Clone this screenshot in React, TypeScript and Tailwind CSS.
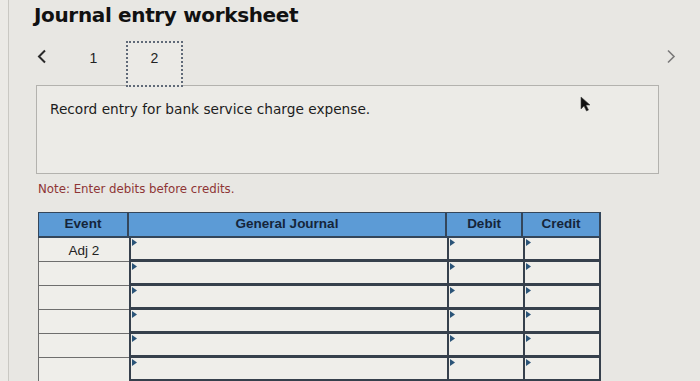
import React from "react";

const Tri = () => (
  <svg width="5" height="7" viewBox="0 0 5 7" className="absolute left-[1px] top-[1px]">
    <polygon points="0,0 5,3.5 0,7" fill="#2b5478" />
  </svg>
);

function InputCell({ w, last }: { w: string; last?: boolean }) {
  return (
    <div
      className={`relative ${w} h-full border-l-2 border-b-[3px] border-[#36404c] bg-[#efeeea] ${last ? "border-r-2" : ""}`}
    >
      <Tri />
    </div>
  );
}

export default function App() {
  const rows = ["Adj 2", "", "", "", "", ""];
  return (
    <div className="relative w-[700px] h-[381px] overflow-hidden bg-[#ebeae6] font-['DejaVu_Sans',sans-serif]">
      <div className="ml-[8px] h-full border-l border-[#c9c8c3] bg-[#e8e7e3]">
        <h1 className="pl-[25px] pt-[1px] text-[20px] leading-[28px] font-bold text-[#111] tracking-[-0.35px]">
          Journal entry worksheet
        </h1>

        {/* nav */}
        <div className="flex items-start h-[44px] mt-[12px] font-['Liberation_Sans',sans-serif] text-[14px] text-[#222]">
          <div className="w-[52px] pl-[28px] pt-[8px]">
            <svg width="10" height="15" viewBox="0 0 10 15">
              <polyline points="8,1.5 2,7.5 8,13.5" fill="none" stroke="#2a2a2a" strokeWidth="2" />
            </svg>
          </div>
          <div className="w-[65px] text-center pt-[7px]">1</div>
          <div className="relative z-10 w-[57px] h-[46px] border-2 border-dotted border-[#606a78] bg-[#ebeae6] text-center pt-[5px]">
            2
          </div>
          <div className="flex-1" />
          <div className="w-[40px] pt-[8px] pl-[6px]">
            <svg width="10" height="15" viewBox="0 0 10 15">
              <polyline points="2,1.5 8,7.5 2,13.5" fill="none" stroke="#7a7a7a" strokeWidth="1.6" />
            </svg>
          </div>
        </div>

        {/* prompt */}
        <div className="ml-[27px] w-[623px] h-[89px] border border-[#b3b2ae] bg-[#ecebe7] pl-[13px] pt-[14px] text-[13.7px] leading-[18px] text-[#1d1d1d]">
          Record entry for bank service charge expense.
        </div>

        <div className="ml-[29px] mt-[8px] text-[11.8px] leading-[14px] text-[#8e3535]">
          Note: Enter debits before credits.
        </div>

        {/* table */}
        <div className="ml-[29px] mt-[16px] w-[563px] font-['Liberation_Sans',sans-serif]">
          <div className="flex h-[26px] bg-[#5c9bd6] border-t border-l border-r-2 border-b-2 border-[#34465a] text-[13.5px] font-bold text-[#15253a]">
            <div className="w-[90px] flex items-center justify-center border-r-2 border-[#34465a]">Event</div>
            <div className="w-[318px] flex items-center justify-center border-r-2 border-[#34465a]">General Journal</div>
            <div className="w-[76px] flex items-center justify-center border-r-2 border-[#34465a]">Debit</div>
            <div className="flex-1 flex items-center justify-center">Credit</div>
          </div>
          {rows.map((r, i) => (
            <div key={i} className="flex h-[24px]">
              <div className="w-[91px] h-full border-l border-b border-[#6e6e6e] bg-[#efeeea] text-[13.5px] text-[#222] flex items-start justify-center pt-[3px]">
                {r}
              </div>
              <InputCell w="w-[318px]" />
              <InputCell w="w-[76px]" />
              <InputCell w="flex-1" last />
            </div>
          ))}
        </div>
      </div>

      {/* mouse cursor */}
      <svg className="absolute left-[580px] top-[96px]" width="11" height="16" viewBox="0 0 11 16">
        <path d="M1 1 L1 13 L4 10 L6.5 15 L8.5 14 L6 9 L10 9 Z" fill="#111" stroke="#444" strokeWidth="0.6" />
      </svg>
    </div>
  );
}
